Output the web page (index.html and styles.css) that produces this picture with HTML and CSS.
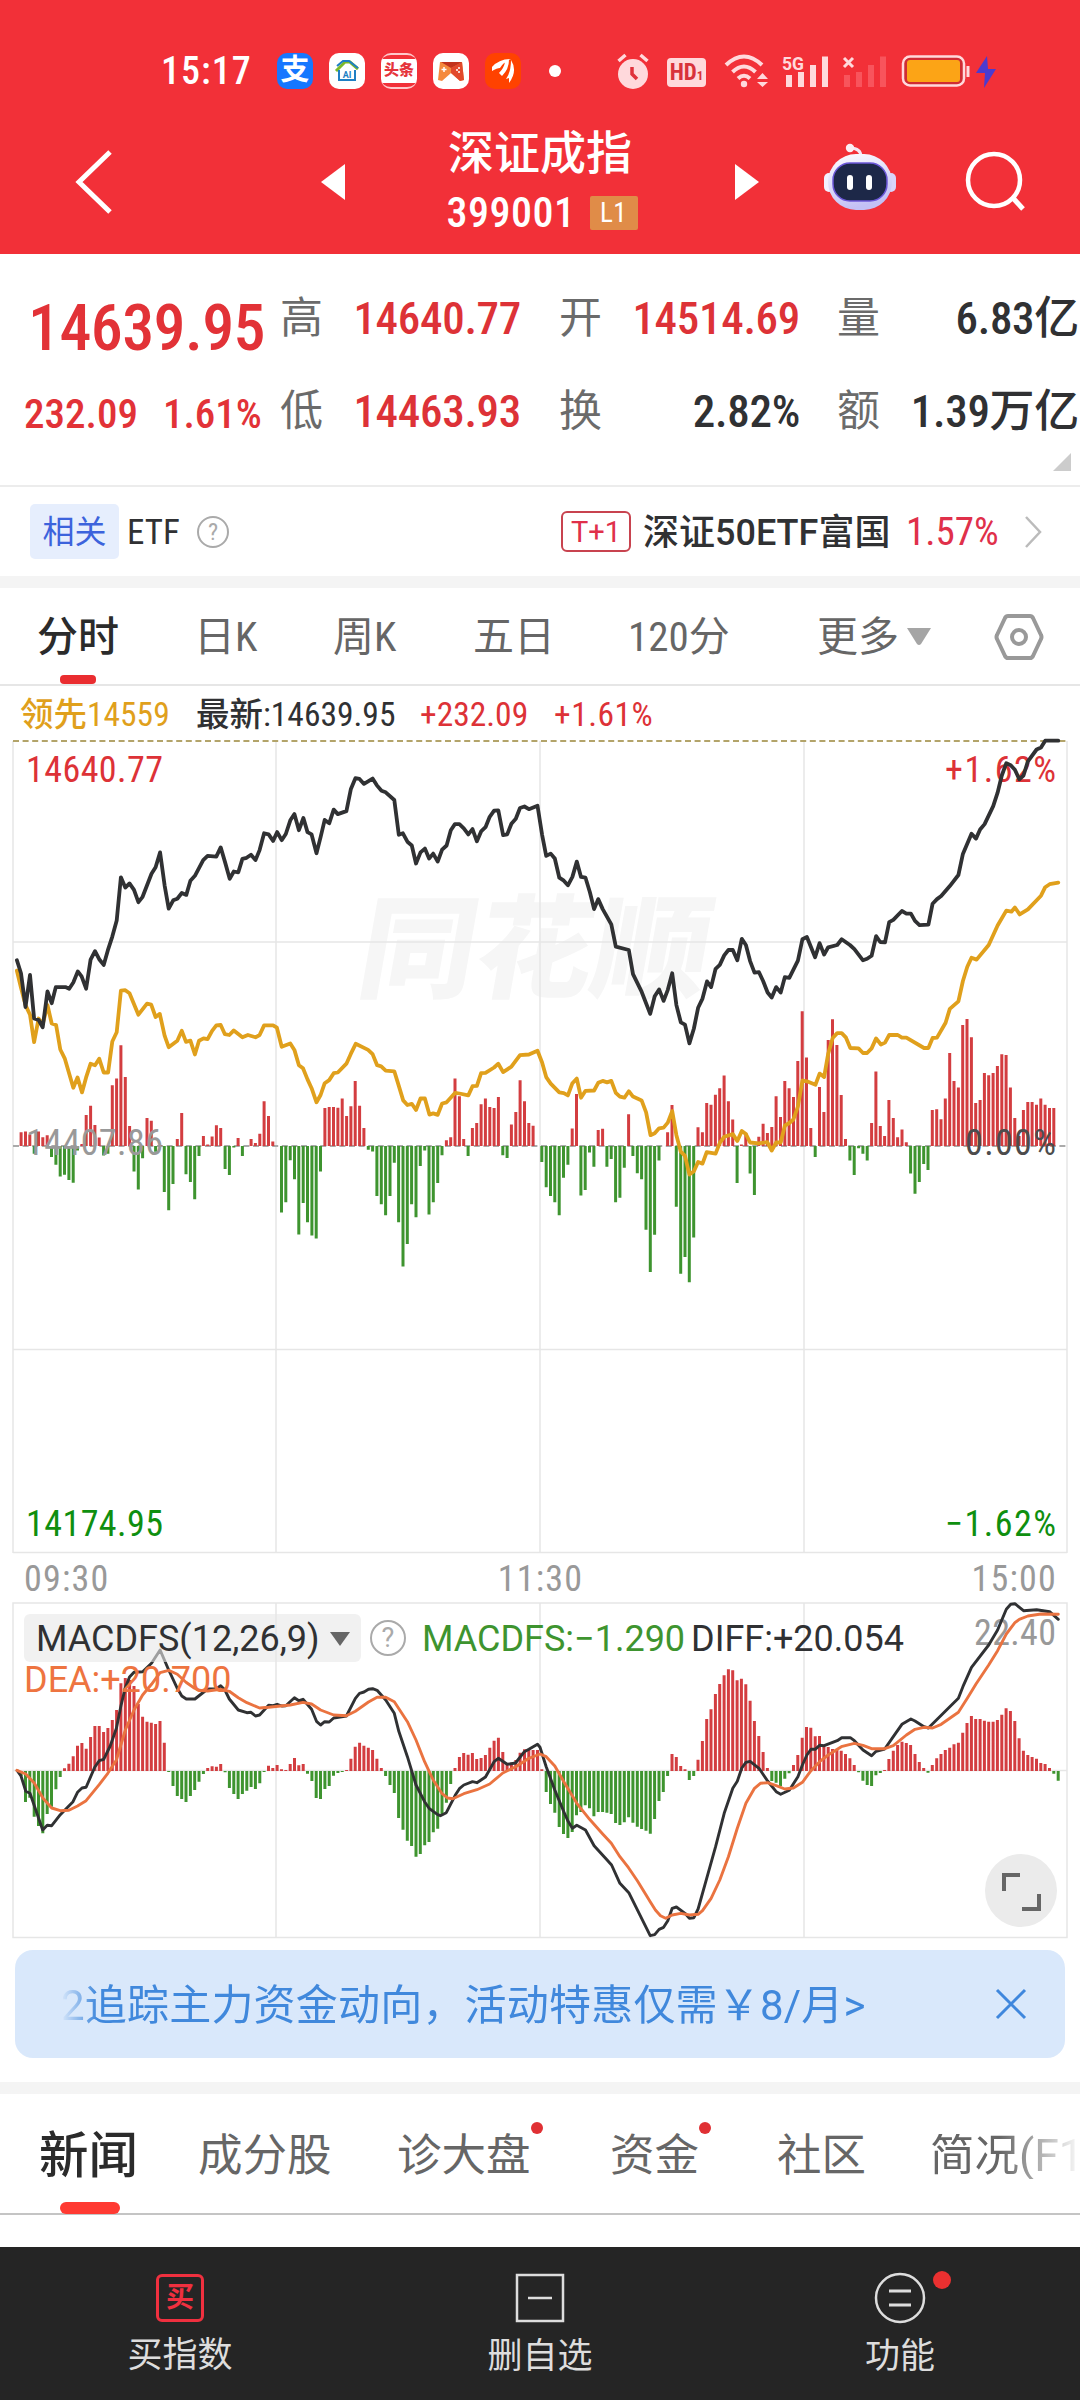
FILE: index.html
```
<!DOCTYPE html>
<html lang="zh-CN">
<head>
  <meta charset="UTF-8" />
  <meta name="viewport" content="width=device-width, initial-scale=1.0"/>
  <title>深证成指 399001</title>
  <link rel="stylesheet" href="styles.css">
</head>
<body>
  <header class="header">
    <div class="status-bar">
      <span class="clock">15:17</span>
      <div class="app-icons">
        <span class="app app-pay">支</span>
        <svg class="app app-home" viewBox="0 0 36 36">
          <path d="M7 18 L16 9 H21 L29 16" fill="none" stroke="#7cb928" stroke-width="3"/>
          <path d="M8 13 L14 8 H20 L29 15 M10 17 V27 H26 V17" fill="none" stroke="#1f7fc4" stroke-width="2"/>
          <text x="18" y="25" text-anchor="middle" class="app-home-text">AI</text>
        </svg>
        <span class="app app-news"><b>头条</b></span>
        <svg class="app app-game" viewBox="0 0 36 36">
          <path d="M7 9 H29 L31 27 L27 28 L18 20 L9 28 L5 27 Z" fill="#f58a3c"/>
          <path d="M18 15 L29 9 L31 27 L27 28 L18 20Z" fill="#e2492c"/>
          <path d="M8 9 H29 L18 15Z" fill="#c2331c"/>
          <path d="M11 14 V19 M8.500 16.500 H13.500" stroke="#fff" stroke-width="1.500"/>
          <circle cx="26" cy="15" r="1" fill="#fff"/><circle cx="26" cy="19" r="1" fill="#fff"/>
          <circle cx="24" cy="17" r="1" fill="#fff"/>
        </svg>
        <svg class="app app-wing" viewBox="0 0 36 36">
          <path d="M7 14 Q14 6 26 6 Q18 9 15 15 Q12 15 7 18Z M14 20 Q19 15 20 9 L24 7 Q24 16 17 23Z M21 26 Q26 19 26 7 Q33 18 24 30 L24 25Z" fill="#fff"/>
        </svg>
      </div>
      <span class="more-dot"></span>
      <div class="sys-icons">
        <svg class="ico-alarm" viewBox="0 0 32 36">
          <circle cx="16" cy="21" r="15" fill="#ffd9dc"/>
          <path d="M1.500 8 L8.500 2 M30.500 8 L23.500 2" stroke="#ffd9dc" stroke-width="3.500"/>
          <path d="M15 14 V21 L20 26" fill="none" stroke="#e0323c" stroke-width="3.500"/>
        </svg>
        <span class="hd">HD<small>1</small></span>
        <svg class="ico-wifi" viewBox="0 0 46 36">
          <path d="M2 12 Q20 -5 38 12 M8.500 19 Q20 8 31.500 19 M14 25.500 Q20 20 26 25.500" fill="none" stroke="#ffd9dc" stroke-width="4"/>
          <circle cx="20" cy="31" r="3.200" fill="#ffd9dc"/>
          <path d="M38.500 20 L44 26 H33Z M33 29 H44 L38.500 34Z" fill="#ffd9dc"/>
        </svg>
        <svg class="ico-signal" viewBox="0 0 48 36">
          <text x="0" y="17" class="net" textLength="22" lengthAdjust="spacingAndGlyphs">5G</text>
          <path d="M7 22 V34 M19 19 V34 M31 12 V34 M43 3.500 V34" stroke="#ffd9dc" stroke-width="6"/>
        </svg>
        <svg class="ico-signal" viewBox="0 0 48 36">
          <path d="M2 5 L11 14 M11 5 L2 14" stroke="#ffd9dc" stroke-width="3"/>
          <path d="M5 22 V34 M17 19 V34 M29 12 V34 M41 3.500 V34" stroke="#f8545c" stroke-width="6"/>
        </svg>
        <svg class="ico-battery" viewBox="0 0 96 36">
          <rect x="2" y="3.500" width="61" height="29" rx="7" fill="#d02c34" stroke="#ffd9dc" stroke-width="2.500"/>
          <rect x="6" y="7" width="53" height="22" rx="3" fill="#fca416"/>
          <path d="M67 13 V24" stroke="#ffd9dc" stroke-width="3"/>
          <path d="M86 3 L75 20 H84 L83 35 L95 16 H87Z" fill="#4a3bd0"/>
        </svg>
      </div>
    </div>

    <div class="nav">
      <svg class="nav-back" viewBox="0 0 50 70"><path d="M40 5 L9 35 L40 65" fill="none" stroke="#fff" stroke-width="5"/></svg>
      <svg class="nav-prev" viewBox="0 0 24 36"><path d="M24 0 V36 L0 18Z" fill="#fff"/></svg>
      <div class="nav-title">
        <h1>深证成指</h1>
        <p><span>399001</span><em>L1</em></p>
      </div>
      <svg class="nav-next" viewBox="0 0 24 36"><path d="M0 0 V36 L24 18Z" fill="#fff"/></svg>
      <svg class="nav-robot" viewBox="0 0 76 70">
        <defs>
          <linearGradient id="shell" x1="0" y1="0" x2="0.300" y2="1">
            <stop offset="0" stop-color="#fff"/><stop offset="1" stop-color="#c3c0f5"/>
          </linearGradient>
        </defs>
        <path d="M39 14 Q39 5 28 5" fill="none" stroke="#f5e6f4" stroke-width="3"/>
        <circle cx="28" cy="5" r="4.200" fill="#fbeff5"/>
        <rect x="2" y="30" width="10" height="19" rx="5" fill="#f3f0ff"/>
        <rect x="64" y="30" width="10" height="19" rx="5" fill="#d9d4fa"/>
        <rect x="6" y="11" width="64" height="56" rx="28" fill="url(#shell)"/>
        <rect x="11" y="20" width="54" height="38" rx="17" fill="#1d2848" stroke="#6b57d8" stroke-width="1.500"/>
        <rect x="25" y="32" width="6" height="15" rx="3" fill="#fff"/>
        <rect x="44" y="32" width="6" height="15" rx="3" fill="#fff"/>
      </svg>
      <svg class="nav-search" viewBox="0 0 62 62">
        <circle cx="29" cy="29" r="26" fill="none" stroke="#fff" stroke-width="4.500"/>
        <path d="M48 47 L58 58" stroke="#fff" stroke-width="5"/>
      </svg>
    </div>
  </header>

  <section class="quote">
    <div class="quote-last">
      <strong>14639.95</strong>
      <p><span>232.09</span><span>1.61%</span></p>
    </div>
    <dl class="quote-grid">
      <dt>高</dt><dd class="up">14640.77</dd>
      <dt>开</dt><dd class="up">14514.69</dd>
      <dt>量</dt><dd>6.83亿</dd>
      <dt>低</dt><dd class="up">14463.93</dd>
      <dt>换</dt><dd>2.82%</dd>
      <dt>额</dt><dd>1.39万亿</dd>
    </dl>
    <i class="corner"></i>
  </section>

  <section class="related">
    <span class="related-tag">相关</span>
    <span class="related-name">ETF</span>
    <span class="help">?</span>
    <span class="t1">T+1</span>
    <span class="etf-name">深证50ETF富国</span>
    <span class="etf-rate">1.57%</span>
    <svg class="arrow" viewBox="0 0 20 34"><path d="M3 2 L17 17 L3 32" fill="none" stroke="#bbb" stroke-width="2.500"/></svg>
  </section>

  <nav class="periods">
    <span class="active">分时</span>
    <span>日K</span>
    <span>周K</span>
    <span>五日</span>
    <span>120分</span>
    <span>更多<svg class="caret" viewBox="0 0 24 18"><path d="M0 0 H24 L14 16 Q12 18 10 16Z" fill="#a5a5a5"/></svg></span>
    <svg class="gear" viewBox="0 0 50 48">
      <path d="M14 3 H36 Q38 3 39 5 L47 22 Q48 24 47 26 L39 43 Q38 45 36 45 H14 Q12 45 11 43 L3 26 Q2 24 3 22 L11 5 Q12 3 14 3Z" fill="none" stroke="#999" stroke-width="4"/>
      <circle cx="25" cy="24" r="7" fill="none" stroke="#999" stroke-width="4"/>
    </svg>
  </nav>

  <div class="summary">
    <span class="lead">领先14559</span>
    <span class="latest">最新:14639.95</span>
    <span class="up chg">+232.09</span>
    <span class="up">+1.61%</span>
  </div>

  <svg class="chart" id="priceChart" viewBox="0 738 1080 817">
    <text class="watermark" transform="translate(354 989) skewX(-10)" textLength="350" lengthAdjust="spacingAndGlyphs">同花顺</text>
    <path class="grid" d="M13 741 V1553 M276 741 V1553 M540 741 V1553 M804 741 V1553 M1067 741 V1553 M13 942 H1067 M13 1349.500 H1067 M13 1552.500 H1067"/>
    <path class="dash dash-top" d="M13 741 H1067"/>
    <path class="dash dash-mid" d="M13 1146 H1067"/>
    <path class="bar-up"/>
    <path class="bar-down"/>
    <text class="lbl up" x="26" y="782" textLength="137">14640.77</text>
    <text class="lbl up" x="945" y="782" textLength="111">+1.62%</text>
    <text class="lbl mid" x="26" y="1155" textLength="137">14407.86</text>
    <text class="lbl zero" x="965" y="1155" textLength="91">0.00%</text>
    <text class="lbl down" x="26" y="1536" textLength="137">14174.95</text>
    <text class="lbl down" x="945" y="1536" textLength="111">−1.62%</text>
    <path class="line avg"/>
    <path class="line price"/>
  </svg>

  <div class="times"><span>09:30</span><span>11:30</span><span>15:00</span></div>

  <div class="macd">
    <svg class="chart" id="macdChart" viewBox="0 1602 1080 337">
      <path class="grid" d="M13 1603 H1067 V1937.500 H13Z M276 1603 V1937 M540 1603 V1937 M804 1603 V1937 M13 1770.500 H1067"/>
      <path class="bar-up"/>
      <path class="bar-down"/>
      <text class="lbl mid" x="974" y="1645" textLength="82">22.40</text>
      <path class="line thin diff"/>
      <path class="line thin dea"/>
    </svg>
    <div class="legend">
      <span class="picker">MACDFS(12,26,9)<svg viewBox="0 0 20 14"><path d="M0 0 H20 L10 14Z" fill="#666"/></svg></span>
      <span class="help">?</span>
      <span class="macdfs">MACDFS:−1.290</span>
      <span class="diff-val">DIFF:+20.054</span>
      <span class="dea-val">DEA:+20.700</span>
    </div>
    <button class="full">
      <svg viewBox="0 0 72 72"><path d="M35 20 H19 V36 M54 39 V54 H37" fill="none" stroke="#666" stroke-width="4"/></svg>
    </button>
  </div>

  <div class="banner">
    <span class="banner-text">2追踪主力资金动向，活动特惠仅需￥8/月&gt;</span>
    <svg class="close" viewBox="0 0 32 32"><path d="M2 2 L30 30 M30 2 L2 30" stroke="#3f87dd" stroke-width="3"/></svg>
  </div>

  <nav class="tabs">
    <span class="active">新闻</span>
    <span>成分股</span>
    <span class="dot">诊大盘</span>
    <span class="dot">资金</span>
    <span>社区</span>
    <span class="fade">简况(F10)</span>
  </nav>

  <footer class="bottom-bar">
    <div class="action">
      <span class="buy">买</span>
      买指数
    </div>
    <div class="action">
      <svg viewBox="0 0 52 52"><path d="M3 3 H49 V49 H3Z M14 26 H38" fill="none" stroke="#ddd" stroke-width="2.500"/></svg>
      删自选
    </div>
    <div class="action">
      <svg viewBox="0 0 52 52"><circle cx="26" cy="26" r="24" fill="none" stroke="#ddd" stroke-width="2.500"/><path d="M15 19 H37 M15 33 H37" stroke="#ddd" stroke-width="3"/></svg>
      功能
      <i class="red-dot"></i>
    </div>
  </footer>

  <script src="charts.js"></script>
</body>
</html>
```

FILE: styles.css
```
* {
  box-sizing: border-box;
}

body {
  margin: 0;
  width: 1080px;
  height: 2400px;
  overflow: hidden;
  background: #fff;
  color: #303133;
  font-family: Roboto, "Noto Sans CJK SC", sans-serif;
  font-stretch: 75%;
  line-height: 1;
  display: flex;
  flex-direction: column;
}

svg {
  display: block;
  flex: none;
}

h1, p, dl, dd {
  margin: 0;
}

.up {
  color: #dd3237;
  fill: #dd3237;
}

/* header */
.header {
  height: 254px;
  flex: none;
  background: #f23038;
  color: #fff;
}

.status-bar {
  height: 110px;
  padding: 32px 0 0 161px;
  display: flex;
  align-items: center;
}

.clock {
  width: 116px;
  font-size: 38px;
  font-stretch: 82%;
  font-weight: 500;
  letter-spacing: 1px;
}

.app-icons {
  display: flex;
  gap: 16px;
}

.app {
  width: 36px;
  height: 36px;
  border-radius: 10px;
  background: #fff;
  text-align: center;
  overflow: hidden;
}

.app-pay {
  background: #1677ff;
  font-size: 29px;
  font-weight: 700;
  line-height: 34px;
}

.app-home-text {
  font: 700 9px Roboto, sans-serif;
  fill: #1f7fc4;
}

.app-news {
  background: #f23038;
  border-top: 2px solid #ffc9cb;
  border-bottom: 2px solid #ffc9cb;
  padding-top: 4px;
}

.app-news b {
  display: block;
  height: 24px;
  line-height: 23px;
  background: #fff;
  color: #e5343b;
  font-size: 15px;
  font-weight: 900;
}

.app-wing {
  background: #ff4200;
}

.more-dot {
  width: 12px;
  height: 12px;
  margin-left: 28px;
  border-radius: 50%;
  background: #fff;
}

.sys-icons {
  display: flex;
  align-items: center;
  margin-left: 56px;
}

.ico-alarm {
  width: 32px;
  height: 36px;
}

.hd {
  width: 39px;
  height: 29px;
  margin: 2px 0 0 18px;
  border-radius: 4px;
  background: #ffd9dc;
  color: #d8323b;
  font-size: 23px;
  font-weight: 700;
  line-height: 29px;
  text-align: center;
}

.hd small {
  font-size: 13px;
}

.ico-wifi {
  width: 46px;
  height: 36px;
  margin-left: 18px;
}

.ico-signal {
  width: 48px;
  height: 36px;
  margin-left: 12px;
}

.net {
  font: 700 19px Roboto, sans-serif;
  fill: #ffd9dc;
}

.ico-battery {
  width: 96px;
  height: 36px;
  margin-left: 11px;
}

.nav {
  height: 144px;
  padding-left: 70px;
  display: flex;
  align-items: center;
}

.nav-back {
  width: 50px;
  height: 70px;
}

.nav-prev {
  width: 24px;
  height: 36px;
  margin-left: 201px;
}

.nav-title {
  width: 300px;
  margin: 0 45px;
  padding-top: 6px;
  text-align: center;
}

.nav-title h1 {
  font-size: 46px;
  font-weight: 500;
  line-height: 46px;
}

.nav-title p {
  height: 54px;
  display: flex;
  align-items: center;
  justify-content: center;
  gap: 14px;
  margin-top: 10px;
  padding-left: 4px;
  font-size: 42px;
  font-weight: 500;
  letter-spacing: 0.5px;
}

.nav-title em {
  width: 48px;
  height: 34px;
  background: #e08c48;
  font-size: 27px;
  font-style: normal;
  font-weight: 400;
  line-height: 35px;
  border-radius: 2px;
}

.nav-next {
  width: 24px;
  height: 36px;
}

.nav-robot {
  width: 76px;
  height: 70px;
  margin: -8px 0 0 63px;
}

.nav-search {
  width: 62px;
  height: 62px;
  margin-left: 67px;
}

/* quote */
.quote {
  position: relative;
  height: 233px;
  flex: none;
  display: flex;
  border-bottom: 2px solid #ececec;
}

.quote-last {
  width: 280px;
  flex: none;
  padding-top: 43px;
  color: #e23237;
}

.quote-last strong {
  display: block;
  padding-left: 28px;
  font-size: 64px;
  font-weight: 500;
  letter-spacing: -0.6px;
}

.quote-last p {
  display: flex;
  gap: 25px;
  padding: 33px 0 0 24px;
  font-size: 41px;
  font-weight: 500;
}

.quote-grid {
  display: grid;
  grid-template-columns: 46px 195px 81px 198px 80px 199px;
  grid-template-rows: 93px 93px;
  padding-top: 18px;
  align-items: center;
  white-space: nowrap;
}

.quote-grid dt {
  font-size: 43px;
  color: #6b6b6b;
  text-align: right;
}

.quote-grid dt:nth-of-type(3n+1) {
  text-align: left;
}

.quote-grid dd {
  text-align: right;
  font-size: 45px;
  font-weight: 500;
  letter-spacing: -0.3px;
}

.corner {
  position: absolute;
  right: 9px;
  bottom: 14px;
  border-left: 18px solid transparent;
  border-bottom: 18px solid #ccc;
}

/* related etf */
.related {
  height: 101px;
  flex: none;
  display: flex;
  align-items: center;
  padding-left: 30px;
  border-bottom: 12px solid #f4f4f4;
  font-size: 35px;
}

.related span {
  flex: none;
}

.related-tag {
  width: 89px;
  height: 55px;
  border-radius: 5px;
  background: #e6eefd;
  color: #3c63dc;
  font-size: 32px;
  line-height: 57px;
  text-align: center;
}

.related-name {
  width: 78px;
  padding: 2px 0 0 8px;
  font-stretch: 85%;
}

.help {
  width: 32px;
  height: 32px;
  border: 2px solid #aaa;
  border-radius: 50%;
  color: #aaa;
  font-size: 24px;
  line-height: 29px;
  text-align: center;
}

.related .t1 {
  width: 70px;
  height: 41px;
  margin-left: 332px;
  border: 2px solid #c8434f;
  border-radius: 6px;
  color: #e0304a;
  font-size: 29px;
  font-stretch: 90%;
  line-height: 39px;
  text-align: center;
}

.etf-name {
  width: 275px;
  padding: 2px 0 0 12px;
  font-size: 36px;
  font-weight: 500;
  font-stretch: 88%;
  white-space: nowrap;
}

.etf-rate {
  width: 117px;
  padding-top: 2px;
  color: #e0304a;
  font-size: 39px;
  font-stretch: 82%;
}

.arrow {
  width: 20px;
  height: 34px;
}

/* period tabs */
.periods {
  height: 98px;
  flex: none;
  display: grid;
  grid-template-columns: 157px 139px 140px 155px 189px 177px 50px;
  align-items: center;
  padding: 2px 0 0 37px;
  border-bottom: 2px solid #e6e6e6;
  font-size: 41px;
  font-stretch: 87%;
  color: #666;
}

.periods span {
  position: relative;
  display: flex;
  align-items: center;
}

.periods .active {
  color: #2b2b2b;
  font-weight: 500;
}

.periods .active::after {
  content: "";
  position: absolute;
  left: 23px;
  top: 58px;
  width: 36px;
  height: 9px;
  border-radius: 4px;
  background: #ea2d30;
}

.caret {
  width: 24px;
  height: 18px;
  margin-left: 8px;
}

.gear {
  width: 50px;
  height: 48px;
}

.summary {
  height: 52px;
  flex: none;
  display: flex;
  align-items: center;
  padding: 5px 0 0 20px;
  font-size: 33.5px;
  font-weight: 450;
  white-space: nowrap;
}

.lead {
  width: 176px;
  color: #e0a01c;
}

.latest {
  width: 224px;
}

.chg {
  width: 134px;
}

.chg + .up {
  letter-spacing: 0.5px;
}

/* charts */
.chart {
  width: 1080px;
}

.grid {
  fill: none;
  stroke: #e6e6e6;
  stroke-width: 1.5;
}

.watermark {
  font: 900 112px "Noto Sans CJK SC", sans-serif;
  fill: #f6f6f6;
}

.dash {
  stroke-width: 1.8;
  stroke-dasharray: 6 3.6;
}

.dash-top {
  stroke: #b3a46a;
}

.dash-mid {
  stroke: #aaa;
}

.bar-up,
.bar-down {
  stroke-width: 3;
}

.bar-up {
  stroke: #d33d40;
}

.bar-down {
  stroke: #3e942f;
}

.lbl {
  font-size: 36px;
  font-weight: 450;
}

.mid {
  fill: #999;
}

.zero {
  fill: #4c4c4c;
}

.down {
  fill: #0f8f0f;
}

.line {
  fill: none;
  stroke-width: 3.8;
  stroke-linejoin: round;
  stroke-linecap: round;
}

.thin {
  stroke-width: 2.9;
}

.price, .diff {
  stroke: #303133;
}

.avg {
  stroke: #e0a01c;
}

.dea {
  stroke: #ea7340;
}

.times {
  height: 47px;
  flex: none;
  display: flex;
  justify-content: space-between;
  align-items: center;
  padding: 0 23px 0 24px;
  color: #999;
  font-size: 36px;
  letter-spacing: 1.2px;
}

.macd {
  position: relative;
}

.legend {
  position: absolute;
  left: 24px;
  top: 12px;
  width: 960px;
  display: flex;
  flex-wrap: wrap;
  align-items: center;
  font-size: 36px;
  font-stretch: 96%;
  white-space: nowrap;
}

.picker {
  width: 337px;
  height: 48px;
  padding: 2px 0 0 12px;
  border-radius: 6px;
  background: rgba(232, 232, 232, 0.6);
  display: flex;
  align-items: center;
  font-stretch: 100%;
}

.picker svg {
  width: 20px;
  height: 14px;
  margin-left: 10px;
}

.legend .help {
  width: 36px;
  height: 36px;
  margin: 0 16px 0 9px;
  font-size: 27px;
  line-height: 33px;
}

.macdfs {
  width: 269px;
  padding-top: 2px;
  color: #3e942f;
}

.diff-val {
  padding-top: 2px;
}

.dea-val {
  width: 100%;
  color: #ee7440;
}

.full {
  position: absolute;
  right: 23px;
  bottom: 12px;
  width: 72px;
  height: 73px;
  padding: 0;
  border: 0;
  border-radius: 50%;
  background: #ebebeb;
}

/* banner */
.banner {
  height: 108px;
  flex: none;
  margin: 11px 15px 24px;
  padding: 0 38px 0 46px;
  border-radius: 18px;
  background: #d9e8fb;
  color: #4088dc;
  display: flex;
  align-items: center;
  justify-content: space-between;
}

.banner-text {
  padding-top: 4px;
  font-size: 42px;
  font-stretch: 90%;
  letter-spacing: 0.2px;
  white-space: nowrap;
  -webkit-mask-image: linear-gradient(90deg, transparent 0, #000 36px);
  mask-image: linear-gradient(90deg, transparent 0, #000 36px);
}

.close {
  width: 32px;
  height: 32px;
}

/* content tabs */
.tabs {
  height: 133px;
  flex: none;
  display: grid;
  grid-template-columns: 159px 199px 213px 167px 153px 160px;
  align-items: center;
  padding: 6px 0 0 39px;
  border-top: 12px solid #f4f4f4;
  border-bottom: 2px solid #c4c4c4;
  font-size: 44.5px;
  color: #666;
  white-space: nowrap;
}

.tabs span {
  position: relative;
  justify-self: start;
}

.tabs .active {
  color: #2b2b2b;
  font-size: 49.5px;
  font-weight: 500;
}

.tabs .active::after {
  content: "";
  position: absolute;
  left: 21px;
  top: 70px;
  width: 60px;
  height: 12px;
  border-radius: 6px;
  background: #ff3a32;
}

.dot::after {
  content: "";
  position: absolute;
  right: -12px;
  top: -12px;
  width: 12px;
  height: 12px;
  border-radius: 50%;
  background: #e03034;
}

.fade {
  font-stretch: 90%;
  -webkit-mask-image: linear-gradient(90deg, #000 70px, transparent 152px);
  mask-image: linear-gradient(90deg, #000 70px, transparent 152px);
}

/* bottom bar */
.bottom-bar {
  height: 153px;
  flex: none;
  margin-top: auto;
  background: #252525;
  display: flex;
  color: #ddd;
  font-size: 35px;
}

.action {
  position: relative;
  flex: 1;
  display: flex;
  flex-direction: column;
  align-items: center;
  padding-top: 25px;
}

.action svg {
  width: 52px;
  height: 52px;
  margin-bottom: 15px;
}

.buy {
  width: 48px;
  height: 48px;
  margin: 2px 0 16px;
  border: 3px solid #f0303f;
  border-radius: 6px;
  color: #f0303f;
  font-size: 28px;
  font-weight: 700;
  line-height: 41px;
  text-align: center;
}

.red-dot {
  position: absolute;
  left: 213px;
  top: 24px;
  width: 18px;
  height: 18px;
  border-radius: 50%;
  background: #ea3030;
}
```

FILE: charts.js
```
// plot geometry
const X0 = 16.8;        // x of 09:30
const STEP = 4.339;     // px per minute
const SCALE_X = 2.904;
const HALF = 540;       // afternoon session starts here

const volume = {
  zero: 1146,
  scale: 2.613,
  values: [
    0,36,38,30,-20,38,23,28,-29,-49,-80,-75,-89,-96,-12,5,81,105,55,22,-25,-20,159,176,263,180,52,-67,-114,-32,
    73,66,-15,3,-120,-168,-99,18,86,-74,-94,-139,-26,26,4,25,54,47,-60,-76,-4,21,-26,0,18,8,32,117,78,12,
    0,-174,-147,-37,-87,-231,-149,-199,-234,-242,-67,99,102,102,100,124,78,104,170,105,47,-10,-14,-131,-152,-181,-131,-44,-199,-315,
    -256,-152,-186,-52,-12,-179,-147,-97,-24,15,23,176,130,18,-26,47,60,109,124,102,99,128,-24,-31,56,89,172,117,60,53,
    0,-42,-108,-131,-147,-181,-83,-49,46,136,-129,-115,-17,-54,42,45,-54,-34,-147,-135,-57,83,-26,-71,-87,-219,-329,-232,-38,0,
    36,107,-159,-334,-290,-356,-239,49,36,112,108,134,151,184,117,69,-97,4,34,-72,-128,24,58,34,50,130,76,170,151,128,
    222,352,231,47,-29,154,89,277,331,264,133,18,-38,-76,-6,-20,-38,60,195,52,26,120,73,23,43,10,-72,-125,-94,-47,
    -63,94,96,70,124,243,170,153,316,332,284,112,120,191,185,191,209,240,238,153,73,26,94,115,115,108,124,108,99,99,0
  ]
};

const macd = {
  zero: 1771,
  scale: 3,
  values: [
    0,-15,-93,-80,-137,-165,-187,-129,-107,-55,-18,8,22,44,76,84,67,102,135,135,117,129,153,183,263,279,273,255,201,163,
    148,145,141,150,85,-3,-45,-75,-84,-93,-75,-57,-32,-9,9,14,13,21,-4,-51,-69,-84,-69,-59,-48,-54,-37,-3,16,9,
    18,5,3,21,39,17,21,-8,-30,-81,-84,-54,-45,-14,-6,-3,3,37,73,85,76,70,63,37,9,-15,-42,-66,-141,-176,
    -209,-225,-257,-249,-223,-213,-184,-173,-132,-95,-39,9,42,54,49,54,36,39,48,70,91,100,57,21,25,33,55,65,63,63,
    63,5,-63,-99,-125,-168,-189,-201,-183,-133,-123,-103,-112,-136,-123,-123,-125,-129,-156,-162,-154,-139,-155,-167,-174,-179,-188,-144,-90,-63,
    -15,51,42,15,5,-27,-15,34,90,156,185,231,261,287,305,302,272,277,260,211,150,105,57,9,-30,-35,-45,-23,-7,18,
    48,100,132,130,104,105,78,72,66,64,61,51,38,18,-4,-29,-42,-45,-13,-6,3,36,61,78,88,84,78,51,27,9,
    -5,18,38,51,63,70,80,85,115,144,165,156,156,151,148,148,153,169,188,180,150,98,61,48,42,37,24,21,9,-8,-29
  ]
};

// x,y pairs: morning session, then afternoon session
const price = {
  am: "49,628 61,662 74,750 87,666 99,780 112,784 124,803 138,709 150,740 162,698 190,698 201,702 213,686 226,657 237,670 250,702 263,626 276,604 288,625 301,640 313,602 326,566 339,524 351,411 364,438 376,427 389,444 402,476 414,462 440,402 452,385 465,346 478,432 490,493 503,471 515,467 528,452 541,457 553,420 566,407 590,366 603,355 628,357 641,333 653,370 667,415 679,396 692,398 704,363 716,360 729,352 742,366 754,340 767,296 780,299 793,316 805,293 818,314 830,298 843,262 855,246 868,288 881,256 893,293 905,299 919,348 931,306 943,261 956,270 969,234 981,246 1006,238 1019,180 1032,152 1044,154 1057,167 1082,153 1094,170 1108,185 1120,189 1145,209 1158,300 1170,296 1183,318 1196,328 1208,375 1221,346 1234,336 1246,362 1258,349 1271,370 1284,339 1297,328 1309,288 1321,272 1334,272 1347,283 1360,299 1372,285 1385,317 1397,291 1410,280 1422,253 1435,237 1447,236 1461,301 1473,299 1485,271 1498,258 1510,230 1523,226 1536,233 1561,224",
  pm: "6,300 18,355 31,349 43,362 56,412 69,420 81,432 94,410 107,370 119,410 132,412 145,450 157,494 169,468 182,494 207,534 220,592 258,601 270,664 295,710 320,768 333,722 346,704 359,734 371,705 384,662 396,745 409,790 421,796 434,845 447,806 459,752 472,728 485,683 497,698 510,650 522,640 535,615 547,601 560,601 573,628 586,572 598,588 610,630 623,660 636,659 648,682 661,712 673,725 686,698 699,712 711,672 724,674 749,629 762,573 775,567 799,620 812,583 825,613 837,594 863,588 876,573 900,588 913,599 938,628 950,624 963,616 976,565 988,580 1002,581 1014,528 1026,522 1051,499 1064,506 1077,506 1089,525 1102,536 1128,535 1140,480 1153,468 1165,460 1190,434 1215,405 1228,350 1253,297 1266,310 1278,286 1291,272 1316,225 1329,190 1341,145 1354,113 1367,118 1379,130 1392,155 1404,145 1417,108 1442,77 1455,72 1467,54 1505,54"
};

const average = {
  am: "49,655 61,700 74,745 87,770 99,842 112,780 124,795 138,745 150,793 163,797 175,861 188,884 213,961 225,934 238,973 250,934 263,898 276,902 288,885 301,921 314,921 326,840 339,816 351,707 364,706 376,714 402,770 427,741 439,744 452,776 464,768 478,825 490,855 515,838 528,812 540,841 553,838 566,874 578,838 591,832 603,834 616,812 628,798 641,797 653,821 666,823 679,811 704,829 720,823 742,829 754,823 767,798 793,798 804,804 818,854 843,845 855,862 868,902 880,910 893,939 905,962 919,999 931,980 943,949 956,941 969,923 981,921 1006,898 1019,872 1033,846 1069,862 1082,873 1095,902 1107,905 1120,916 1145,918 1158,956 1171,994 1183,1006 1196,1003 1208,1019 1221,989 1234,989 1247,1031 1258,1028 1271,1032 1284,1002 1297,999 1322,974 1334,976 1360,981 1372,957 1385,956 1397,923 1410,922 1435,908 1447,898 1461,920 1485,906 1510,876 1536,874 1561,864",
  pm: "6,895 18,933 31,950 56,973 69,975 81,981 94,949 107,937 119,987 132,969 157,968 169,948 182,943 195,947 207,943 220,974 232,984 245,987 258,970 270,984 295,994 308,1025 321,1085 333,1080 346,1067 359,1065 371,1052 384,1022 396,1085 409,1128 421,1139 434,1188 447,1179 459,1155 472,1159 484,1129 510,1133 522,1105 535,1089 560,1082 573,1100 586,1074 598,1082 610,1104 635,1106 660,1103 673,1125 686,1104 699,1104 711,1060 724,1053 736,1044 749,1010 762,942 775,944 800,953 812,924 825,933 837,872 850,831 863,818 876,818 888,829 901,857 925,858 938,870 950,870 963,858 976,832 990,848 1002,843 1014,823 1039,823 1051,830 1064,830 1115,857 1128,857 1140,831 1153,830 1178,791 1190,755 1215,735 1228,682 1241,645 1253,621 1268,626 1303,588 1329,537 1354,498 1369,501 1379,490 1393,508 1417,495 1455,459 1467,437 1480,429 1505,425"
};

const diff = {
  am: "50,872 61,888 75,934 87,940 124,1050 137,1036 150,1037 175,1004 212,965 225,937 238,924 250,922 275,862 288,842 301,838 320,798 338,745 351,678 364,623 376,591 389,577 414,575 440,550 465,510 490,570 515,625 528,648 541,657 566,657 603,627 628,626 641,617 653,630 666,657 692,690 717,698 729,697 742,708 754,705 780,676 793,677 805,673 818,678 830,677 855,653 868,662 880,658 905,688 919,724 931,735 943,725 956,726 969,714 1006,708 1032,655 1044,640 1057,636 1070,628 1082,626 1095,631 1120,660 1145,700 1158,754 1183,830 1208,915 1233,965 1246,985 1271,1004 1279,1007 1296,998 1322,946 1334,926 1347,915 1372,905 1385,908 1410,891 1435,845 1447,835 1473,853 1497,849 1523,815 1536,808 1561,793",
  pm: "0,802 18,860 43,930 69,995 81,1023 94,1045 107,1036 132,1050 157,1097 195,1140 208,1155 232,1210 258,1238 320,1367 333,1364 346,1348 359,1342 371,1322 384,1285 396,1281 421,1300 434,1315 447,1313 459,1287 484,1195 510,1100 535,1000 560,925 573,904 586,864 598,847 610,844 636,865 661,903 686,935 699,943 724,931 749,890 762,855 775,825 787,808 799,808 812,796 825,797 863,782 876,773 901,773 913,782 938,810 963,827 976,814 1001,807 1026,770 1051,733 1077,717 1089,723 1115,740 1128,744 1190,680 1215,655 1228,620 1253,562 1303,495 1329,450 1354,388 1367,373 1379,371 1404,392 1442,389 1480,395 1505,418"
};

const dea = {
  am: "49,871 75,882 100,910 125,955 150,984 175,992 200,991 225,978 250,962 288,914 313,880 338,840 364,750 389,690 414,645 440,613 465,578 490,571 515,583 540,607 565,625 578,631 603,633 641,628 666,634 692,653 717,668 754,684 780,682 843,675 880,667 905,672 931,690 969,705 1006,707 1032,694 1070,666 1095,652 1120,652 1145,665 1183,725 1208,780 1233,845 1258,900 1284,941 1300,954 1315,956 1347,941 1385,929 1422,912 1460,879 1498,860 1536,835 1561,825",
  pm: "0,822 18,830 43,858 69,905 107,970 144,1018 182,1062 207,1090 232,1130 257,1163 283,1203 308,1245 320,1265 335,1290 350,1307 365,1315 384,1305 409,1300 434,1305 459,1303 472,1292 497,1255 522,1200 547,1130 573,1045 598,970 623,925 640,910 661,908 686,917 711,927 736,924 762,907 787,872 812,845 837,825 875,800 913,790 938,796 963,806 1001,806 1026,797 1064,765 1089,748 1115,742 1140,744 1165,733 1190,715 1215,697 1241,655 1266,612 1303,555 1329,512 1354,462 1379,428 1392,418 1417,408 1455,402 1505,403"
};

function points(text, offset, top, scale) {
  return text.split(" ").map(p => {
    const [x, y] = p.split(",");
    return (offset + x / SCALE_X).toFixed(1) + " " + (top + y / scale).toFixed(1);
  });
}

function drawLine(selector, data, top, scale) {
  const all = points(data.am, 0, top, scale).concat(points(data.pm, HALF, top, scale));
  document.querySelector(selector).setAttribute("d", "M" + all.join(" L"));
}

function drawBars(id, data) {
  let up = "", down = "";
  data.values.forEach((v, i) => {
    if (!v) return;
    const x = (X0 + i * STEP).toFixed(1);
    const bar = `M${x} ${data.zero} v${(-v / data.scale).toFixed(1)}`;
    if (v > 0) up += bar; else down += bar;
  });
  document.querySelector(id + " .bar-up").setAttribute("d", up);
  document.querySelector(id + " .bar-down").setAttribute("d", down);
}

drawBars("#priceChart", volume);
drawBars("#macdChart", macd);
drawLine(".price", price, 720, volume.scale);
drawLine(".avg", average, 720, volume.scale);
drawLine(".diff", diff, 1480, macd.scale);
drawLine(".dea", dea, 1480, macd.scale);
```
